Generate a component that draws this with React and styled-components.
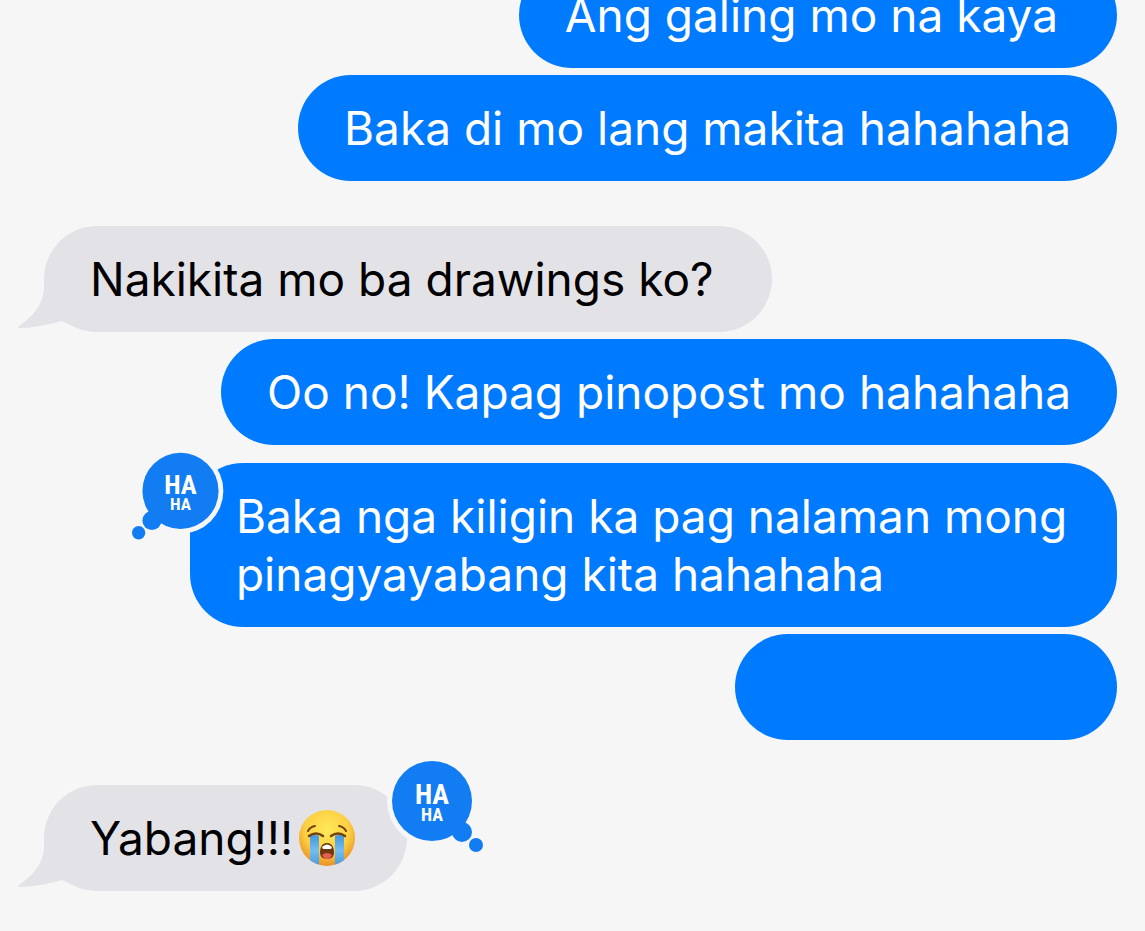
import React from 'react';
import styled, { createGlobalStyle, css } from 'styled-components';

const colors = {
  page: '#f6f6f7',
  sent: '#007aff',
  received: '#e3e2e7',
  tapback: '#127cf2',
};

const GlobalStyle = createGlobalStyle`
  body {
    margin: 0;
    background: ${colors.page};
    overflow: hidden;
  }
`;

const Thread = styled.ol`
  display: flex;
  flex-direction: column;
  margin: -38px 0 0;
  padding: 0 28px 40px 44px;
  list-style: none;
  font-family: Inter, 'Liberation Sans', sans-serif;
  font-size: 46px;
  line-height: 58px;
`;

const gaps = {
  none: '0',
  tight: '7px',
  tapback: '18px',
  turn: '45px',
};

const Row = styled.li`
  display: flex;
  justify-content: ${({ $sent }) => ($sent ? 'flex-end' : 'flex-start')};
  margin-top: ${({ $gap }) => gaps[$gap]};
`;

const Bubble = styled.div`
  position: relative;
  box-sizing: border-box;
  max-width: 86.4%;
  min-height: 106px;
  padding: 24px 46px;
  border-radius: 53px;

  ${({ $sent }) =>
    $sent
      ? css`
          background: ${colors.sent};
          color: #fff;
        `
      : css`
          background: ${colors.received};
          color: #000;
        `}

  ${({ $blank }) =>
    $blank &&
    css`
      width: 382px;
    `}
`;

const TailShape = styled.svg`
  position: absolute;
  left: -26px;
  bottom: 0;
  width: 60px;
  height: 50px;
`;

const TapbackShape = styled.svg`
  position: absolute;
  overflow: visible;

  ${({ $side }) =>
    $side === 'left'
      ? css`
          top: -14px;
          left: -59px;
          width: 99px;
          height: 99px;
        `
      : css`
          top: -28px;
          right: -77px;
          width: 104px;
          height: 104px;
        `}

  text {
    fill: #fff;
    font-family: 'Liberation Sans Narrow', 'Roboto Condensed', 'Liberation Sans', sans-serif;
    font-weight: 700;
    text-anchor: middle;
  }
`;

const EmojiShape = styled.svg`
  width: 56px;
  height: 56px;
  margin: 0 6px;
  vertical-align: -11px;
`;

const Tail = () => (
  <TailShape viewBox="0 0 60 50" aria-hidden="true">
    <path
      d="M26 0C27 17 21 30 1 44C-1 46 1 46 5 46C20 45 33 42 44 39C47 40 50 42 54 44L60 30L40 0Z"
      fill={colors.received}
    />
  </TailShape>
);

const Tapback = ({ side }) => {
  const dir = side === 'left' ? -1 : 1;

  return (
    <TapbackShape $side={side} viewBox="-52 -44 104 104" role="img" aria-label="Ha ha">
      <g fill={colors.page}>
        <circle r="45" />
        <circle cx={30 * dir} cy="31" r="14" />
        <circle cx={44 * dir} cy="44" r="9" />
      </g>
      <g fill={colors.tapback}>
        <circle r="40" />
        <circle cx={30 * dir} cy="31" r="10" />
        <circle cx={44 * dir} cy="44" r="7" />
      </g>
      <text y="3" fontSize="28">
        HA
      </text>
      <text y="20" fontSize="18">
        HA
      </text>
    </TapbackShape>
  );
};

const SobbingFace = () => (
  <EmojiShape viewBox="0 0 56 56" role="img" aria-label="Loudly crying face">
    <defs>
      <radialGradient id="face" cx="50%" cy="36%" r="66%">
        <stop offset="0" stopColor="#ffe95a" />
        <stop offset="0.6" stopColor="#fdcf42" />
        <stop offset="1" stopColor="#e88a22" />
      </radialGradient>
      <linearGradient id="tears" x1="0" y1="0" x2="0" y2="1">
        <stop offset="0" stopColor="#4296dc" />
        <stop offset="0.5" stopColor="#74bdf3" />
        <stop offset="1" stopColor="#4799e0" />
      </linearGradient>
      <clipPath id="edge">
        <circle cx="28" cy="28" r="28" />
      </clipPath>
    </defs>
    <circle cx="28" cy="28" r="28" fill="url(#face)" />
    <g clipPath="url(#edge)">
      <path d="M11 26Q16 24 20 26V56H11Z" fill="url(#tears)" />
      <path d="M36 26Q40 24 45 26V56H36Z" fill="url(#tears)" />
    </g>
    <g fill="none" stroke="#70420e" strokeLinecap="round">
      <path d="M9 21Q11 17 16 16" strokeWidth="2" />
      <path d="M47 21Q45 17 40 16" strokeWidth="2" />
      <path d="M10 26Q17 21 24 26" strokeWidth="2.5" />
      <path d="M32 26Q39 21 46 26" strokeWidth="2.5" />
    </g>
    <path
      d="M28 33C33 33 35 38 35 42C35 47 32 49 28 49S21 47 21 42C21 38 23 33 28 33Z"
      fill="#713712"
    />
    <path d="M23 37Q28 32 33 37L32 39H24Z" fill="#fff" />
    <path d="M23 45Q28 41 33 45Q31 49 28 49T23 45Z" fill="#e66050" />
  </EmojiShape>
);

const messages = [
  { id: 1, sent: true, gap: 'none', text: 'Ang galing mo na kaya\u00a0' },
  { id: 2, sent: true, gap: 'tight', text: 'Baka di mo lang makita hahahaha' },
  { id: 3, gap: 'turn', tail: true, text: 'Nakikita mo ba drawings ko?\u00a0' },
  { id: 4, sent: true, gap: 'tight', text: 'Oo no! Kapag pinopost mo hahahaha' },
  {
    id: 5,
    sent: true,
    gap: 'tapback',
    tapback: 'left',
    text: 'Baka nga kiligin ka pag nalaman mong pinagyayabang kita hahahaha',
  },
  { id: 6, sent: true, gap: 'tight', text: '' },
  { id: 7, gap: 'turn', tail: true, tapback: 'right', text: 'Yabang!!!', sobbing: true },
];

export default function App() {
  return (
    <>
      <GlobalStyle />
      <Thread>
        {messages.map(({ id, sent, gap, tail, tapback, text, sobbing }) => (
          <Row key={id} $sent={sent} $gap={gap}>
            <Bubble $sent={sent} $blank={!text}>
              {tail && <Tail />}
              {text}
              {sobbing && <SobbingFace />}
              {tapback && <Tapback side={tapback} />}
            </Bubble>
          </Row>
        ))}
      </Thread>
    </>
  );
}
